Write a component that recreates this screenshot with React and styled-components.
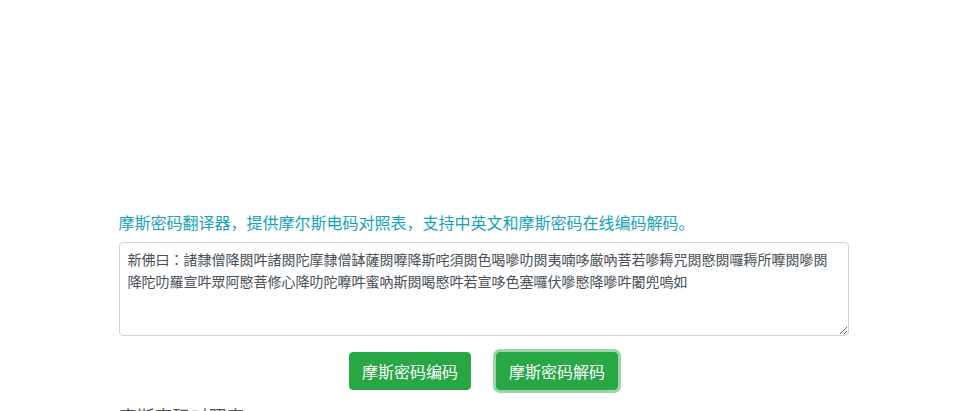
import React from "react";
import styled, { createGlobalStyle } from "styled-components";

const Global = createGlobalStyle`
  html, body { margin: 0; padding: 0; background: #fff; }
  body {
    font-family: "Microsoft YaHei", "Noto Sans CJK SC", "Noto Sans", sans-serif;
    color: #333;
    overflow: hidden;
  }
`;

const Page = styled.div`
  width: 730px;
  margin: 0 auto;
  padding: 210px 1px 0 0;
  display: flex;
  flex-direction: column;
`;

const Intro = styled.p`
  margin: 0;
  font-size: 16px;
  line-height: 24px;
  color: #17a2b8;
`;

const Input = styled.textarea`
  box-sizing: border-box;
  margin-top: 8px;
  width: 100%;
  height: 94px;
  padding: 5px 8px;
  border: 1px solid #ced4da;
  border-radius: 4px;
  font-family: "Microsoft YaHei", "Noto Sans CJK TC", "Noto Sans CJK SC", sans-serif;
  font-size: 14px;
  line-height: 22px;
  color: #495057;
  background: #fff;
  outline: none;
  resize: vertical;
`;

const Actions = styled.div`
  margin-top: 16px;
  display: flex;
  justify-content: center;
  gap: 25px;
`;

const Button = styled.button`
  box-sizing: border-box;
  height: 38px;
  padding: 0 12px;
  border: 1px solid #28a745;
  border-radius: 4px;
  background: #28a745;
  color: #fff;
  font-family: "Microsoft YaHei", "Noto Sans CJK SC", sans-serif;
  font-size: 16px;
  line-height: 24px;
  cursor: pointer;
  box-shadow: ${(p) => (p.$focused ? "0 0 0 3px rgba(72, 180, 97, 0.55)" : "none")};
`;

const Heading = styled.h3`
  margin: 13px 0 0;
  font-size: 18px;
  line-height: 26px;
  font-weight: normal;
  color: #555;
`;

const cipher =
  "新佛曰：諸隸僧降閦吽諸閦陀摩隸僧缽薩閦嚤降斯咤須閦色喝嘇叻閦夷喃哆厳吶菩若嘇耨咒閦愍閦囉耨所嚤閦嘇閦降陀叻羅宣吽眾阿愍菩修心降叻陀嚤吽蜜吶斯閦喝愍吽若宣哆色塞囉伏嘇愍降嘇吽闍兜嗚如";

export default function App() {
  return (
    <>
      <Global />
      <Page>
        <Intro>摩斯密码翻译器，提供摩尔斯电码对照表，支持中英文和摩斯密码在线编码解码。</Intro>
        <Input defaultValue={cipher} spellCheck={false} />
        <Actions>
          <Button>摩斯密码编码</Button>
          <Button $focused>摩斯密码解码</Button>
        </Actions>
        <Heading>摩斯密码对照表</Heading>
      </Page>
    </>
  );
}
